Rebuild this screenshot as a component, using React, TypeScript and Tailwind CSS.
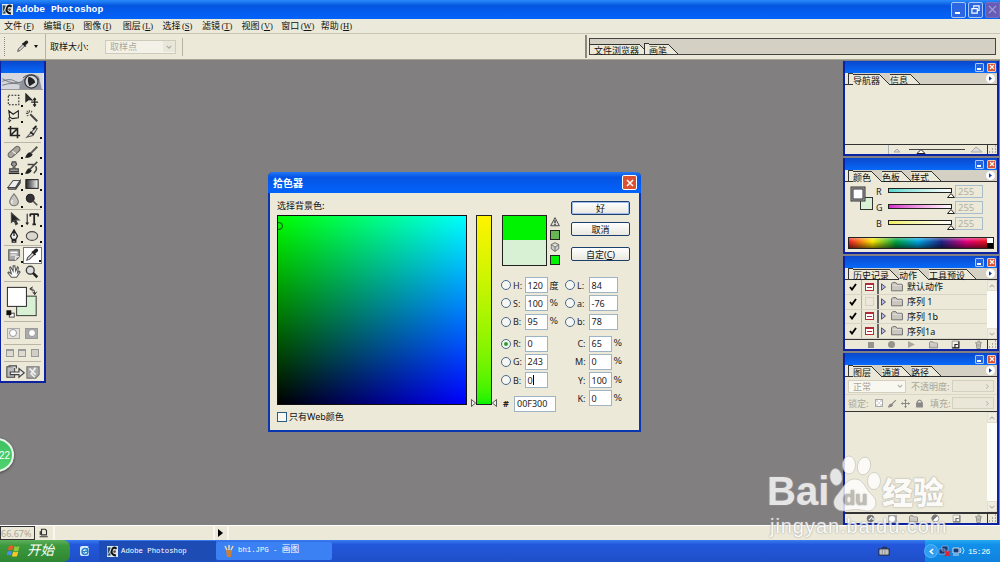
import type { ReactNode } from "react";
import clsx from "clsx";

type TabDef = { label: string; width: string; active?: boolean };

const menus = [
    ["文件", "F"], ["编辑", "E"], ["图像", "I"], ["图层", "L"], ["选择", "S"],
    ["滤镜", "T"], ["视图", "V"], ["窗口", "W"], ["帮助", "H"],
];

const SIMSUN = "font-['Liberation_Mono','Noto_Sans_CJK_SC',monospace]";
const TAHOMA = "font-['Noto_Sans','Noto_Sans_CJK_SC',sans-serif]";

/* ---------- icons ---------- */

function Icon({ children, className = "size-[14px]", box = "0 0 16 16" }: { children: ReactNode; className?: string; box?: string }) {
    return (
        <svg viewBox={box} className={clsx("shrink-0", className)} fill="none" stroke="#222" strokeWidth="1.2">
            {children}
        </svg>
    );
}

const Dropper = ({ className }: { className?: string }) => (
    <Icon className={className}>
        <path d="M2 14l1-3 6-6 2 2-6 6z" fill="#ddd" stroke="#555" />
        <path d="M8 4l4 4M9 5l3-3q2-1 2 1l-3 3z" fill="#222" strokeWidth="2" />
    </Icon>
);

const PsLogo = () => (
    <Icon className="size-[11px]">
        <rect x="0" y="0" width="16" height="16" fill="#dfe9f2" stroke="none" />
        <path d="M1 2h4v12H1z" fill="#2b4a63" stroke="none" />
        <path d="M14 4Q9 0 7 6t6 8" stroke="#111" strokeWidth="3" />
        <path d="M2 12l4-8" stroke="#fff" />
        <circle cx="11" cy="8" r="2" fill="#6b4c3b" stroke="none" />
    </Icon>
);

const Trash = ({ className = "size-[10px]" }: { className?: string }) => (
    <Icon className={className}>
        <path d="M2 5h12M4 5l1 10h6l1-10M6 2l4 0 1 2M7 7v6M9 7v6" stroke="#8a8a85" strokeWidth="1.6" />
    </Icon>
);

const NewPage = ({ dark }: { dark?: boolean }) => (
    <Icon className="size-[9px]">
        <path d="M2 2h12v12H2z" fill="#f4f1e6" stroke={dark ? "#888" : "#aaa"} strokeWidth="1.4" />
        <path d="M2 14h12V2M7 14V8h5" stroke={dark ? "#222" : "#777"} strokeWidth="2" />
    </Icon>
);

const Folder = ({ className = "h-[9px] w-[11px]", tone = "#c9c7bf" }: { className?: string; tone?: string }) => (
    <Icon className={className} box="0 0 22 18">
        <path d="M1 16V3l2-2h6l2 3h9l1 1v11z" fill={tone} stroke="#666" strokeWidth="1.6" />
        <path d="M3 6h16" stroke="#eee" />
    </Icon>
);

const tools: ReactNode[][] = [
    [
        <Icon><rect x="1.5" y="2.5" width="12" height="11" strokeDasharray="2 1.6" /></Icon>,
        <Icon><path d="M1 1v9l3-2.5L8 8z" fill="#333" /><path d="M7 10.500h8M11 6.500v8M9.500 8l1.500-2 1.500 2M9.500 13l1.500 2 1.500-2" strokeWidth="1.5" /></Icon>,
        <Icon><path d="M2 2l5 4 6-4v8l-7 1-3-2zM3 9q-2 3 1 4l-2 2" /></Icon>,
        <Icon><path d="M6 6l8 8" stroke="#444" strokeWidth="2.200" /><path d="M5 1v3M1 5h3M2 2l2 2M8 2L7 4M2 8l2-1" stroke="#555" /></Icon>,
        <Icon><path d="M4 1v11h11M1 4h11v11M4 12l8-8" strokeWidth="1.800" /></Icon>,
        <Icon><path d="M2 14L12 3l2 1-5 8z" fill="#ddd" stroke="#555" /><path d="M9 5l4-4M6 8l4 3" strokeWidth="2" /></Icon>,
    ],
    [
        <Icon><rect x="0" y="5" width="16" height="6" rx="3" transform="rotate(-42 8 8)" fill="#aaa69c" stroke="#666" /><path d="M6 7l4 3" stroke="#eee" /></Icon>,
        <Icon><path d="M1 14q2-5 5-5l2 2q-2 3-7 3z" fill="#222" /><path d="M7 9l7-7" stroke="#555" strokeWidth="2.200" /></Icon>,
        <Icon><path d="M6 1h4l1 3-2 2v3h4v3H3V9h4V6L5 4z" fill="#999" stroke="#444" /><path d="M2 14h12" strokeWidth="1.800" /></Icon>,
        <Icon><path d="M1 14q2-5 4-5l2 2q-2 3-6 3z" fill="#222" /><path d="M6 9l8-8M3 4h7M12 6q3 4-2 8" stroke="#444" strokeWidth="1.700" /></Icon>,
        <Icon><path d="M1 12l6-8h8l-5 8z" fill="#eee" stroke="#555" /><path d="M1 12h9v2H2zM10 12l5-8v3l-5 7" fill="#888" stroke="#444" /></Icon>,
        <Icon><defs><linearGradient id="g"><stop stopColor="#222" /><stop offset="1" stopColor="#fff" /></linearGradient></defs><rect x="1" y="3" width="14" height="10" fill="url(#g)" /></Icon>,
        <Icon><path d="M8 1q5 6 5 9a5 4.500 0 0 1-10 0q0-3 5-9z" fill="#c6c4bd" stroke="#777" /><path d="M6 8q-1 2 0 4" stroke="#fff" /></Icon>,
        <Icon><circle cx="6" cy="6" r="4.500" fill="#333" /><path d="M9 9l5 5" stroke="#555" strokeWidth="2" /></Icon>,
    ],
    [
        <Icon><path d="M5 1v11l3-2.500 2 5 2-1-2-4.500h4z" fill="#222" stroke="#444" /></Icon>,
        <Icon><path d="M6 2.500h9M6 2v3M15 2v3M10.500 3v11M8.500 14h4" strokeWidth="2" /><path d="M2.500 2v12M1 12l1.500 2L4 12" /></Icon>,
        <Icon><path d="M8 1L4 8l2 4h4l2-4zM6 13h4v2H6zM8 2v6" fill="#eee" strokeWidth="1.500" /></Icon>,
        <Icon><ellipse cx="8" cy="8" rx="6.500" ry="5" fill="#d8d6cf" stroke="#444" /></Icon>,
    ],
    [
        <Icon><path d="M2 2h12v8l-4 4H2z" fill="#aaa" stroke="#555" /><path d="M4 5h8M4 8h7M10 14v-4h4" stroke="#fff" /></Icon>,
        <Dropper />,
        <Icon><path d="M5 14L1 9l1-1 3 2-2-7 1-1 3 5V1h2l1 6 2-5 1 1-1 6 2-2 1 1-4 6z" fill="#fafafa" stroke="#555" /></Icon>,
        <Icon><circle cx="6" cy="6" r="4.500" fill="#ddd" stroke="#444" strokeWidth="1.600" /><path d="M9 9l5 5" strokeWidth="3" /></Icon>,
    ],
];

const flyouts = [
    [true, false, true, false, false, true],
    [true, true, true, true, true, true, true, true],
    [true, true, true, true],
    [true, true, false, false],
];

/* ---------- shared pieces ---------- */

function PaletteTab({ tab }: { tab: TabDef }) {
    return (
        <div className="flex h-full items-end">
            <span className={clsx("h-[10px] border-t border-[#333] bg-[#ece9d8] whitespace-nowrap text-[9px] leading-[11px] text-[#111]", tab.width, tab.active && "-mb-px h-[11px]")}>
                {tab.label}
            </span>
            <svg viewBox="0 0 10 11" className={clsx("h-[11px] w-[10px] shrink-0", tab.active && "-mb-px")}>
                <path d="M0 1L10 11H0z" fill="#ece9d8" />
                <path d="M0 1L10 11" stroke="#333" />
            </svg>
        </div>
    );
}

function Palette({ className, tabs, children }: { className: string; tabs: TabDef[]; children: ReactNode }) {
    return (
        <section className={clsx("absolute left-[843px] flex w-[156px] flex-col border-2 border-t-0 border-[#0c22a0] bg-[#ece9d8]", className)}>
            <header className="flex h-[12px] shrink-0 items-center justify-end gap-[3px] bg-linear-to-b from-[#0a48cc] to-[#0769fa] pr-px">
                <span className="flex h-[9px] w-[9px] items-end rounded-[1px] border border-[#a9c8f5] bg-[#2563dc] p-px">
                    <i className="h-[2px] w-[4px] bg-white" />
                </span>
                <span className="flex size-[9px] items-center justify-center rounded-[1px] border border-[#f0c8bd] bg-[#d75332]">
                    <svg viewBox="0 0 6 6" className="size-[6px]"><path d="M1 1l4 4M5 1L1 5" stroke="#fff" strokeWidth="1.200" /></svg>
                </span>
            </header>
            <div className="flex h-[12px] shrink-0 items-end border-b border-[#333] bg-[#d4d0c3] pr-[2px]">
                <span className="h-full w-[3px] bg-[#ece9d8]" />
                <span className="h-full w-[5px] border-t border-l border-[#333] bg-[#ece9d8]" />
                {tabs.map((t) => <PaletteTab key={t.label} tab={t} />)}
                <span className="mb-px ml-auto flex size-[9px] items-center justify-center rounded-full bg-white">
                    <svg viewBox="0 0 4 6" className="h-[5px] w-[3px]"><path d="M0 0l4 3-4 3z" fill="#1b3c9c" /></svg>
                </span>
            </div>
            {children}
        </section>
    );
}

const Grip = () => (
    <span className="flex h-full w-[10px] shrink-0 items-end justify-end border-l border-[#333]">
        <svg viewBox="0 0 9 9" className="size-[9px]">
            <path d="M7 1h1M7 4h1M4 4h1M7 7h1M4 7h1M1 7h1" stroke="#999" strokeWidth="1.500" />
        </svg>
    </span>
);

function ScrollBar() {
    return (
        <div className="flex w-[10px] shrink-0 flex-col justify-between bg-[#fcfcf8]">
            {["M1 4l3-3 3 3", "M1 1l3 3 3-3"].map((d) => (
                <span key={d} className="flex h-[11px] items-center justify-center border border-[#e2dfd0] bg-[#efece0]">
                    <svg viewBox="0 0 8 5" className="h-[4px] w-[6px]"><path d={d} fill="none" stroke="#b5b2a5" strokeWidth="1.400" /></svg>
                </span>
            ))}
        </div>
    );
}

/* ---------- application chrome ---------- */

function TitleBar() {
    return (
        <div className="flex h-[19px] items-center bg-linear-to-b from-[#2b8bfa] via-[#0556e0] via-30% to-[#0263fb] pl-[2px]">
            <PsLogo />
            <span className={clsx("ml-[3px] text-[9.700px] leading-none font-bold text-white", SIMSUN)}>Adobe Photoshop</span>
            <div className="ml-auto flex gap-[2px]">
                <span className="flex h-[16px] w-[15px] items-end rounded-[2px] border border-[#a6c5f7] bg-[#2c66e0] p-[3px]"><i className="h-[2px] w-[5px] bg-white" /></span>
                <span className="flex h-[16px] w-[15px] items-center justify-center rounded-[2px] border border-[#a6c5f7] bg-[#2c66e0]">
                    <svg viewBox="0 0 10 10" className="size-[9px]"><path d="M3 3V1h6v5H7M1 4h6v5H1z" fill="none" stroke="#fff" strokeWidth="1.300" /></svg>
                </span>
                <span className="flex h-[16px] w-[15px] items-center justify-center rounded-[2px] border border-[#776fc5] bg-[#675cb5]">
                    <svg viewBox="0 0 10 10" className="size-[9px]"><path d="M1 1l8 8M9 1L1 9" stroke="#a9a0d4" strokeWidth="1.400" /></svg>
                </span>
            </div>
        </div>
    );
}

function MenuBar() {
    return (
        <div className="flex h-[14px] items-center bg-[#ebe9d9] pl-[4px] text-[#111]">
            {menus.map(([name, key]) => (
                <span key={key} className="flex w-[39.600px] shrink-0 items-baseline text-[9px] leading-[15px] whitespace-nowrap">
                    {name}
                    <span className="pl-[1.500px] text-[8.500px] font-['Liberation_Serif',serif]">(<u>{key}</u>)</span>
                </span>
            ))}
        </div>
    );
}

function OptionsBar() {
    return (
        <div className="flex h-[27px] items-center border-t border-b border-t-[#c9c6b7] border-b-[#a7a492] bg-[#ece9d8]">
            <span className="ml-[4px] h-[19px] border-l border-dotted border-[#888]" />
            <Dropper className="ml-[11px] size-[13px]" />
            <svg viewBox="0 0 4 3" className="ml-[5px] h-[3px] w-[4px]"><path d="M0 0h4L2 3z" fill="#111" /></svg>
            <span className="ml-[7px] h-full border-l border-[#b5b2a3]" />
            <span className="ml-[4px] w-[55px] text-[9px] leading-none text-[#111]">取样大小:</span>
            <span className="flex h-[14px] w-[71px] items-center justify-between border border-[#cfcbbb] bg-[#f4f2e8] pl-[4px] text-[9px] leading-none text-[#aaa79a]">
                取样点
                <span className="flex h-[11px] w-[12px] items-center justify-center bg-[#e9e6da]">
                    <svg viewBox="0 0 8 5" className="h-[4px] w-[6px]"><path d="M1 1l3 3 3-3" fill="none" stroke="#aaa" strokeWidth="1.500" /></svg>
                </span>
            </span>
            <span className="ml-[6px] h-[18px] border-l border-[#b5b2a3]" />
            <span className="ml-auto h-[23px] w-[2px] bg-[#8a887f]" />
            <div className="mr-[4px] ml-[2px] flex h-[17px] w-[407px] items-end border border-[#444] bg-[#d4d0c3] text-[#111]">
                <PaletteTab tab={{ label: "文件浏览器", width: "w-[49px] pl-[4px]" }} />
                <span className="-ml-[5px] h-[11px] w-[5px] border-t border-l border-[#333] bg-[#ece9d8]" />
                <PaletteTab tab={{ label: "画笔", width: "w-[19px]" }} />
            </div>
        </div>
    );
}

function ToolBox() {
    const heights = ["h-[53px]", "h-[67px]", "h-[36px]", "h-[36px]"];
    return (
        <aside className="absolute top-[61px] left-0 flex h-[322px] w-[46px] flex-col border-r-2 border-b-2 border-l border-[#0c22a0] bg-[#ece9d8]">
            <div className="h-[12px] shrink-0 bg-linear-to-b from-[#0a48cc] to-[#0769fa]" />
            <svg viewBox="0 0 42 17" className="h-[17px] w-[42px] shrink-0 border-b border-[#999] bg-[#d8dade]">
                <rect width="42" height="17" fill="#d5d7dc" />
                <path d="M0 9q8-4 14 0t13-4M0 6q12 8 24 2M0 13q12-4 22 0" stroke="#70757d" fill="none" />
                <path d="M18 17q0-8 7-13t14 0l3 13z" fill="#8f929a" />
                <circle cx="31" cy="9" r="7" fill="#d5d8dc" stroke="#333" strokeWidth="1.300" />
                <path d="M28 4q6 1 7 6l-6 4q-3-5-1-10z" fill="#222" />
                <path d="M22 5q8-7 17 2" stroke="#444" fill="none" />
            </svg>
            {tools.map((group, g) => (
                <div key={g} className={clsx("mx-[3px] grid shrink-0 grid-cols-2 content-center border-b border-[#b9b6a8]", heights[g])}>
                    {group.map((icon, i) => (
                        <span key={i} className={clsx("relative flex h-[16.300px] w-[19px] items-center justify-center", g === 3 && i === 1 && "border border-[#777] bg-white")}>
                            {icon}
                            {flyouts[g][i] && <i className="absolute right-0 bottom-[1px] size-[2px] bg-[#111]" />}
                        </span>
                    ))}
                </div>
            ))}
            <div className="mx-[3px] h-[40px] shrink-0 border-b border-[#b9b6a8]">
                <svg viewBox="0 0 38 40" className="h-[39px] w-[38px]">
                    <rect x="12.500" y="14.500" width="20" height="20" fill="#d8f0d4" stroke="#333" />
                    <rect x="3" y="5.500" width="19.500" height="19.500" fill="#fff" stroke="#222" />
                    <rect x="5" y="32" width="5" height="4" fill="#fff" stroke="#444" />
                    <rect x="2" y="29" width="5" height="5" fill="#111" />
                    <path d="M27 7q4 0 4 5M29 5l-3 2 3 2M29 10l2 3 2-3" fill="none" stroke="#222" />
                </svg>
            </div>
            <div className="mx-[3px] flex h-[23px] shrink-0 items-center justify-around border-b border-[#b9b6a8]">
                <span className="flex h-[11px] w-[13px] items-center justify-center border border-[#aaa] bg-[#e4e2da]"><i className="size-[8px] rounded-full border border-[#999] bg-white" /></span>
                <span className="flex h-[11px] w-[13px] items-center justify-center border border-[#999] bg-[#aaa]"><i className="size-[8px] rounded-full border border-[#999] bg-white" /></span>
            </div>
            <div className="mx-[3px] flex h-[17px] shrink-0 items-center justify-around border-b border-[#b9b6a8]">
                <i className="size-[8px] border border-t-2 border-[#999] bg-[#dddbd0]" />
                <i className="size-[8px] border border-t-2 border-[#999] bg-[#dddbd0]" />
                <i className="size-[8px] border border-[#999] bg-[#d0cec5]" />
            </div>
            <div className="flex grow items-center justify-center gap-[1px]">
                <Icon className="h-[14px] w-[19px]" box="0 0 22 16">
                    <path d="M1 2h9v12H1z" fill="#bbb" stroke="#444" />
                    <path d="M3 1h9v3M5 8h10V4l6 5-6 5v-3H5z" fill="#eee" stroke="#444" strokeWidth="1.400" />
                </Icon>
                <Icon className="size-[14px]">
                    <path d="M1 2h14v9l-4 4H1z" fill="#aaa" stroke="#777" />
                    <path d="M4 4l7 7M11 3l-5 7 4 4" stroke="#eee" strokeWidth="2" />
                </Icon>
            </div>
        </aside>
    );
}

/* ---------- palettes ---------- */

function Navigator() {
    return (
        <Palette className="top-[61px] h-[95px]" tabs={[{ label: "导航器", width: "w-[27px]", active: true }, { label: "信息", width: "w-[20px]" }]}>
            <div className="grow" />
            <div className="flex h-[10px] shrink-0 items-center border-t border-[#333]">
                <span className="h-full w-[44px] border-r border-[#aab4b8]" />
                <svg viewBox="0 0 98 9" className="h-[9px] w-[98px]">
                    <path d="M5 7l3-3 3 3zM82 7l5-5 6 5z" fill="#ddd" stroke="#aaa" />
                    <path d="M20 4.500h56" stroke="#444" />
                    <path d="M28 8.500l4-4 4 4z" fill="#fff" stroke="#222" />
                </svg>
                <Grip />
            </div>
        </Palette>
    );
}

const channels = [
    { name: "R", bar: "from-[#54d8d0]" },
    { name: "G", bar: "from-[#d32cc8]" },
    { name: "B", bar: "from-[#f3ef62]" },
];

function ColorPalette() {
    return (
        <Palette className="top-[158px] h-[96px]" tabs={[{ label: "颜色", width: "w-[19px]", active: true }, { label: "色板", width: "w-[19px]" }, { label: "样式", width: "w-[20px]" }]}>
            <div className="flex grow pt-px">
                <svg viewBox="0 0 30 30" className="h-[30px] w-[30px]">
                    <rect x="15.500" y="14.500" width="12" height="12" fill="#d8f0d4" stroke="#333" />
                    <rect x="7" y="5" width="12" height="12" fill="#fff" stroke="#333" strokeWidth="3" />
                    <rect x="7" y="5" width="12" height="12" fill="none" stroke="#aaa" />
                </svg>
                <div className="flex grow flex-col">
                    {channels.map((c) => (
                        <div key={c.name} className="flex h-[16px] items-center">
                            <span className={clsx("w-[13px] pl-px text-[9px] leading-none text-[#222]", TAHOMA)}>{c.name}</span>
                            <span className="flex h-[11px] w-[67px] flex-col items-start pt-[2px]">
                                <i className={clsx("h-[5px] w-[64px] shrink-0 border border-[#222] bg-linear-to-r to-white", c.bar)} />
                                <svg viewBox="0 0 8 5" className="ml-[59px] h-[5px] w-[8px] shrink-0"><path d="M.5 4.500L4 .5l3.500 4z" fill="#fff" stroke="#222" /></svg>
                            </span>
                            <span className={clsx("h-[13px] w-[28px] border border-[#a9bccb] pl-[2px] text-[9.500px] leading-[12px] text-[#b3b0a3]", TAHOMA)}>255</span>
                        </div>
                    ))}
                </div>
            </div>
            <div className="mx-[3px] mb-[3px] flex h-[12px] shrink-0 border border-[#222]">
                <div className="grow bg-[linear-gradient(to_bottom,rgba(255,255,255,.35),transparent_35%,rgba(0,0,0,.55)),linear-gradient(to_right,#f11c24,#fbe800_17%,#00a23f_34%,#00a5e4_50%,#1f2585_67%,#e4007f_85%,#e8131c)]" />
                <div className="flex w-[6px] flex-col"><i className="h-1/2 bg-white" /><i className="h-1/2 bg-black" /></div>
            </div>
        </Palette>
    );
}

const actions = [
    { name: "默认动作", modal: true },
    { name: "序列 1", modal: false },
    { name: "序列 1b", modal: true },
    { name: "序列1a", modal: true },
];

function ActionsPalette() {
    return (
        <Palette className="top-[256px] h-[95px]" tabs={[{ label: "历史记录", width: "w-[36px]" }, { label: "动作", width: "w-[20px]", active: true }, { label: "工具预设", width: "w-[37px]" }]}>
            <div className="flex h-[59px] shrink-0">
                <div className="flex grow flex-col">
                    {actions.map((a) => (
                        <div key={a.name} className="flex h-[14.750px] items-center border-b border-[#d8d5c6]">
                            <span className="flex h-full w-[17px] items-center justify-center border-r border-[#aaa]">
                                <svg viewBox="0 0 8 8" className="size-[8px]"><path d="M1 4l2 2.500L7 1" fill="none" stroke="#000" strokeWidth="1.900" /></svg>
                            </span>
                            <span className="flex h-full w-[17px] items-center justify-center border-r-2 border-[#666]">
                                {a.modal
                                    ? <i className="flex h-[8px] w-[9px] items-center justify-center border border-t-2 border-[#b22a35] bg-white"><i className="h-px w-[5px] bg-[#b22a35]" /></i>
                                    : <i className="size-[9px] border border-[#d5d2c3]" />}
                            </span>
                            <svg viewBox="0 0 5 8" className="ml-[2px] h-[8px] w-[5px]"><path d="M.5 .8l4 3.200-4 3.200z" fill="#b7b7ea" stroke="#334" strokeWidth=".8" /></svg>
                            <Folder className="ml-[5px] h-[10px] w-[12px]" />
                            <span className={clsx("ml-[4px] text-[9px] leading-none whitespace-nowrap text-[#111]", TAHOMA)}>{a.name}</span>
                        </div>
                    ))}
                </div>
                <ScrollBar />
            </div>
            <div className="flex grow items-center border-t border-[#333]">
                <div className="flex grow items-center justify-between pr-[4px] pl-[23px]">
                    <i className="size-[6px] bg-[#96948c]" />
                    <i className="size-[7px] rounded-full bg-[#96948c]" />
                    <svg viewBox="0 0 7 7" className="size-[7px]"><path d="M0 0l7 3.500L0 7z" fill="#aaa89f" /></svg>
                    <Folder className="h-[8px] w-[9px]" />
                    <NewPage dark />
                    <Trash className="size-[9px]" />
                </div>
                <Grip />
            </div>
        </Palette>
    );
}

const ValueBox = () => (
    <span className="flex h-[12px] w-[42px] items-center justify-end border border-[#d3d0c0] bg-[#eae7d8] pr-[4px]">
        <svg viewBox="0 0 4 6" className="h-[5px] w-[3px]"><path d="M0 0l3 3-3 3" fill="none" stroke="#aaa" strokeWidth="1.300" /></svg>
    </span>
);

function LayersPalette() {
    return (
        <Palette className="top-[353px] h-[172px]" tabs={[{ label: "图层", width: "w-[19px]", active: true }, { label: "通道", width: "w-[19px]" }, { label: "路径", width: "w-[20px]" }]}>
            <div className="flex h-[18px] shrink-0 items-center border-b border-[#dad7c8] px-[3px] pt-px text-[9px] leading-none whitespace-nowrap text-[#aaa79a]">
                <span className="flex h-[13px] w-[58px] items-center justify-between border border-[#d3d0c0] bg-[#f8f7f0] pr-[2px] pl-[4px]">
                    正常
                    <svg viewBox="0 0 8 5" className="h-[4px] w-[6px]"><path d="M1 1l3 3 3-3" fill="none" stroke="#b5b2a5" strokeWidth="1.500" /></svg>
                </span>
                <span className="ml-[5px] w-[41px]">不透明度:</span>
                <ValueBox />
            </div>
            <div className="flex h-[17px] shrink-0 items-center border-b border-[#333] px-[3px] text-[9px] leading-none whitespace-nowrap text-[#aaa79a]">
                <span className="w-[27px]">锁定:</span>
                <i className="size-[8px] border border-[#aaa] bg-[repeating-conic-gradient(#fff_0_25%,#ddd_0_50%)] bg-size-[4px_4px]" />
                <Icon className="ml-[5px] size-[9px]"><path d="M1 14q2-5 5-5l2 2q-2 3-7 3zM7 9l7-7" fill="#888" stroke="#888" strokeWidth="2" /></Icon>
                <Icon className="ml-[4px] size-[9px]"><path d="M8 1v14M1 8h14M6 3l2-2 2 2M6 13l2 2 2-2M3 6L1 8l2 2M13 6l2 2-2 2" stroke="#777" strokeWidth="1.500" /></Icon>
                <Icon className="ml-[5px] size-[9px]"><path d="M3 7h10v7H3z" fill="#888" stroke="#888" strokeWidth="2" /><path d="M4 7V5q4-6 8 0v2" stroke="#888" strokeWidth="2" /></Icon>
                <span className="ml-[6px] w-[22px]">填充:</span>
                <ValueBox />
            </div>
            <div className="flex grow">
                <div className="grow" />
                <ScrollBar />
            </div>
            <div className="flex h-[11px] shrink-0 items-center border-t-2 border-[#333]">
                <div className="flex grow items-center justify-between pr-[4px] pl-[21px]">
                    <Icon className="size-[9px]"><circle cx="8" cy="8" r="6" fill="#777" stroke="#666" /><path d="M5 11l6-6" stroke="#fff" strokeWidth="2" /></Icon>
                    <i className="flex h-[8px] w-[9px] items-center justify-center bg-[#aaa]"><i className="size-[6px] rounded-full bg-white" /></i>
                    <Folder className="h-[8px] w-[9px]" />
                    <Icon className="size-[9px]"><circle cx="8" cy="8" r="6" fill="#fff" stroke="#777" /><path d="M3 12A6 6 0 0 1 12 3z" fill="#777" stroke="none" /></Icon>
                    <NewPage />
                    <Trash className="size-[9px]" />
                </div>
                <Grip />
            </div>
        </Palette>
    );
}

/* ---------- colour picker dialog ---------- */

const Radio = ({ on }: { on?: boolean }) => (
    <span className="flex size-[10px] shrink-0 items-center justify-center rounded-full border border-[#49688a] bg-[#f7f7f2]">
        {on && <i className="size-[4px] rounded-full bg-[#2aa52a]" />}
    </span>
);

function Field({ label, value, unit, width = "w-[23px]", radio, on, caret }: { label: string; value: string; unit?: string; width?: string; radio?: boolean; on?: boolean; caret?: boolean }) {
    return (
        <div className={clsx("flex h-[18.300px] items-center text-[9px] leading-none text-[#222]", TAHOMA)}>
            {radio ? <Radio on={on} /> : <span className="w-[10px]" />}
            <span className={clsx("shrink-0", radio ? "w-[13.500px] pl-[2px]" : "w-[10.500px] text-right")}>{label}:</span>
            {!radio && <span className="w-[3px]" />}
            <span className={clsx("flex h-[16px] shrink-0 items-center border border-[#9db4c4] bg-white pl-[2px]", width)}>
                {value}
                {caret && <i className="h-[10px] border-l border-black" />}
            </span>
            <span className={clsx("pl-[2px]", unit === "%" && "font-['DejaVu_Sans',sans-serif]")}>{unit}</span>
        </div>
    );
}

function XpButton({ children, focus }: { children: ReactNode; focus?: boolean }) {
    return (
        <button className={clsx("flex h-[14px] w-[59px] items-center justify-center rounded-[2px] border border-[#1d3f70] bg-linear-to-b from-white to-[#e9e7de] text-[9px] leading-none text-[#111]", focus && "shadow-[inset_0_0_0_1px_#9dbcf0]", TAHOMA)}>
            <span>{children}</span>
        </button>
    );
}

function ColorPicker() {
    return (
        <div className="absolute top-[172px] left-[268px] flex h-[260px] w-[373px] flex-col rounded-t-[5px] border-[2px] border-t-0 border-[#0a35b0] bg-[#ece9d8]">
            <header className="-mx-[2px] flex h-[21px] shrink-0 items-center justify-between rounded-t-[5px] bg-linear-to-b from-[#2377f4] via-[#0554e4] via-25% to-[#0363fb] pr-[4px] pl-[5px]">
                <span className="text-[10px] leading-none font-bold text-white">拾色器</span>
                <span className="flex size-[15px] items-center justify-center rounded-[2px] border border-white bg-[#dc5130]">
                    <svg viewBox="0 0 8 8" className="size-[8px]"><path d="M1 1l6 6M7 1L1 7" stroke="#fff" strokeWidth="1.500" /></svg>
                </span>
            </header>
            <div className="flex grow pl-[7px]">
                <div className="flex w-[193px] flex-col">
                    <span className="h-[22px] pt-[8px] text-[9px] leading-[10px] whitespace-nowrap text-[#111]">选择背景色:</span>
                    <div className="relative h-[190px] w-[190px] shrink-0 overflow-hidden border border-[#111] bg-[linear-gradient(to_bottom,#00ff00,#000),linear-gradient(to_right,#000,#0000ff)] bg-blend-screen">
                        <i className="absolute top-[6px] left-[-3px] size-[8px] rounded-full border border-[#0b4d0b]" />
                    </div>
                    <div className="mt-[6px] flex items-center gap-[2px]">
                        <i className="size-[10px] border border-[#2d5a80] bg-[#f7f7f4]" />
                        <span className={clsx("text-[9px] leading-[12px] text-[#111]", TAHOMA)}>只有Web颜色</span>
                    </div>
                </div>
                <div className="flex w-[28px] pt-[22px] pl-px">
                    <svg viewBox="0 0 5 8" className="mt-[184px] h-[8px] w-[5px] shrink-0"><path d="M.5 .5L4.500 4l-4 3.500z" fill="#eee" stroke="#333" strokeWidth=".8" /></svg>
                    <i className="h-[190px] w-[16px] shrink-0 border border-[#222] bg-linear-to-b from-[#fff300] to-[#00f300]" />
                    <svg viewBox="0 0 5 8" className="mt-[184px] h-[8px] w-[5px] shrink-0"><path d="M4.500 .5L.5 4l4 3.500z" fill="#eee" stroke="#333" strokeWidth=".8" /></svg>
                </div>
                <div className="flex flex-col pl-[3px]">
                    <div className="flex h-[83px]">
                        <div className="mt-[22px] ml-px flex h-[51px] w-[45px] flex-col border border-[#222]">
                            <i className="grow bg-[#00f300]" />
                            <i className="h-[25px] bg-[#d8f0d4]" />
                        </div>
                        <div className="ml-[3px] flex w-[10px] flex-col items-center gap-[2.500px] pt-[24px]">
                            <Icon className="size-[10px]"><path d="M8 1L1 14h14z" fill="#ddd" stroke="#444" strokeWidth="1.500" /><path d="M8 5v5M8 11v2" strokeWidth="2" /></Icon>
                            <i className="size-[10px] border border-[#222] bg-[#68b653]" />
                            <Icon className="size-[10px]"><path d="M8 1l6 3v7l-6 4-6-4V4zM2 4l6 4 6-4M8 8v7" fill="#ccc" stroke="#555" /></Icon>
                            <i className="size-[10px] border border-[#222] bg-[#00f300]" />
                        </div>
                        <div className="ml-[11px] flex flex-col pt-[8px]">
                            <XpButton focus>好</XpButton>
                            <div className="pt-[7px]"><XpButton>取消</XpButton></div>
                            <div className="pt-[11px]"><XpButton>自定(<u>C</u>)</XpButton></div>
                        </div>
                    </div>
                    <div className="flex">
                        <div className="w-[64px]">
                            <Field radio label="H" value="120" unit="度" />
                            <Field radio label="S" value="100" unit="%" />
                            <Field radio label="B" value="95" unit="%" />
                            <div className="h-[3.500px]" />
                            <Field radio on label="R" value="0" />
                            <Field radio label="G" value="243" />
                            <Field radio label="B" value="0" caret />
                        </div>
                        <div>
                            <Field radio label="L" value="84" width="w-[29px]" />
                            <Field radio label="a" value="-76" width="w-[29px]" />
                            <Field radio label="b" value="78" width="w-[29px]" />
                            <div className="h-[3.500px]" />
                            <Field label="C" value="65" unit="%" />
                            <Field label="M" value="0" unit="%" />
                            <Field label="Y" value="100" unit="%" />
                            <Field label="K" value="0" unit="%" />
                        </div>
                    </div>
                    <div className={clsx("-mt-[12px] flex h-[16px] w-[56px] items-center text-[9px] leading-none text-[#222]", TAHOMA)}>
                        <span className="w-[13px] pl-[2px] font-bold">#</span>
                        <span className="flex h-[16px] w-[42px] items-center border border-[#9db4c4] bg-white pl-[2px]">00F300</span>
                    </div>
                </div>
            </div>
        </div>
    );
}

/* ---------- bottom bars ---------- */

function StatusBar() {
    return (
        <div className="flex h-[15px] items-center border-t border-white bg-[#ece9d8]">
            <span className={clsx("flex h-[14px] w-[35px] items-center border border-[#333] text-[9px] leading-none text-[#a9a69a]", TAHOMA)}>66.67%</span>
            <Icon className="ml-[4px] size-[10px]"><path d="M4 2h6l2 2v7H4zM1 14h13M4 6H2v5" stroke="#333" strokeWidth="1.800" /></Icon>
            <span className="ml-[4px] h-full w-[2px] bg-[#f8f6ee]" />
            <span className="ml-[158px] h-full w-[2px] bg-[#f8f6ee]" />
            <svg viewBox="0 0 5 8" className="ml-[3px] h-[8px] w-[5px]"><path d="M0 0l5 4-5 4z" fill="#000" /></svg>
            <span className="ml-[4px] h-full w-[2px] bg-[#f8f6ee]" />
        </div>
    );
}

function Taskbar() {
    return (
        <div className="flex h-[22px] items-center bg-linear-to-b from-[#3a7df0] via-[#2358dc] via-20% to-[#1f4fc8] text-white">
            <div className="flex h-full w-[70px] items-center rounded-r-[7px] bg-linear-to-b from-[#5fb05c] via-[#3c9a3d] via-25% to-[#2f8632] pl-[7px]">
                <svg viewBox="0 0 16 14" className="h-[12px] w-[14px]">
                    <path d="M2 1q3-1 5 0L6 6Q4 5 1 6z" fill="#f0582c" />
                    <path d="M8.500 1.500q3 1 6 0L13 7q-3 1-5.500 0z" fill="#8ecb3b" />
                    <path d="M.5 7.500q3-1 5 0L4.500 12q-2-1-5 0z" fill="#4b8ef0" />
                    <path d="M7 8q3 1 6 0l-1.500 5q-3 1-6 0z" fill="#fbc72f" />
                </svg>
                <span className="-mt-[3px] ml-[6px] text-[13.500px] leading-none italic">开始</span>
            </div>
            <svg viewBox="0 0 12 12" className="ml-[9px] size-[12px]">
                <rect x="1" y="1" width="9" height="10" rx="2" fill="#d8ecfa" />
                <circle cx="6" cy="6.500" r="3" fill="none" stroke="#2b7fc9" strokeWidth="1.500" />
                <path d="M3 6.500h6M4 9l6-7" stroke="#2b7fc9" />
            </svg>
            <div className={clsx("ml-[8px] flex h-[20px] w-[117px] items-center bg-[#1c4cb4] pl-[8px] text-[7.300px]", SIMSUN)}>
                <PsLogo />
                <span className="ml-[3px] pt-px whitespace-nowrap">Adobe Photoshop</span>
            </div>
            <div className={clsx("flex h-[18px] w-[116px] items-center rounded-[2px] bg-[#3c81f3] pl-[8px] text-[7.300px]", SIMSUN)}>
                <svg viewBox="0 0 10 12" className="h-[12px] w-[10px]">
                    <path d="M2 5h6l-1 7H3z" fill="#c8813b" />
                    <path d="M1 1l2 4M5 0v5M9 1L7 5" stroke="#e9d9b8" strokeWidth="1.500" />
                </svg>
                <span className="ml-[4px] whitespace-nowrap">bh1.JPG - <span className="text-[8.700px]">画图</span></span>
            </div>
            <svg viewBox="0 0 12 10" className="mr-[35px] ml-auto h-[10px] w-[12px]">
                <rect x="1" y="3" width="10" height="6" fill="#eee" stroke="#222" />
                <path d="M2.500 5h7M2.500 7h7" stroke="#333" strokeDasharray="1 .6" />
                <path d="M4 2q2-2 5 0" stroke="#222" fill="none" />
            </svg>
            <div className="flex h-full w-[75px] items-center bg-linear-to-b from-[#27aaf3] via-[#1291ea] via-20% to-[#0f82de]">
                <span className="flex size-[12px] shrink-0 items-center justify-center rounded-full bg-[#2f9df2] shadow-[0_0_0_1px_#4fb4f8]">
                    <svg viewBox="0 0 6 8" className="h-[7px] w-[5px]"><path d="M5 1L1.500 4 5 7" stroke="#fff" strokeWidth="1.800" fill="none" /></svg>
                </span>
                <svg viewBox="0 0 28 12" className="ml-px h-[12px] w-[28px] shrink-0">
                    <path d="M4 1h6v5H4zM1 4h6v5H1z" fill="#163a78" stroke="#9bb7dd" strokeWidth=".7" />
                    <path d="M7 6l5 5M12 6l-5 5" stroke="#e3202c" strokeWidth="1.800" />
                    <path d="M15 3h6v5h-6zM15 10h6" fill="#163a78" stroke="#c7dcf2" />
                    <path d="M22 3q2 2 0 5M24.500 2q3 3.500 0 7" stroke="#c7e3fa" fill="none" />
                </svg>
                <span className={clsx("ml-[2px] pt-[2px] text-[8px] leading-none tracking-[-.400px]", SIMSUN)}>15:26</span>
            </div>
        </div>
    );
}

function Watermark() {
    return (
        <div className="absolute top-[454px] left-[766px] h-[88px] w-[184px] opacity-80 [text-shadow:0_0_2px_#999,0_0_1px_#aaa]">
            <div className="flex h-[60px] items-end">
                <span className="w-[62px] pl-px text-[40px] leading-[45px] font-bold text-white font-['Liberation_Sans',sans-serif]">Bai</span>
                <svg viewBox="0 0 54 58" className="mb-px h-[58px] w-[54px] shrink-0" fill="#fff" stroke="#bbb" strokeWidth=".7">
                    <ellipse cx="8" cy="22" rx="6" ry="8.500" transform="rotate(-8 8 22)" />
                    <ellipse cx="21" cy="10" rx="6.500" ry="9" />
                    <ellipse cx="36" cy="11" rx="6.500" ry="9" transform="rotate(15 36 11)" />
                    <ellipse cx="46" cy="26" rx="6.500" ry="8.500" />
                    <path d="M27 24c9 0 10 10 17 16s4 17-6 16c-6-2-14-2-21 0-10 1-15-8-8-16s9-16 18-16z" />
                    <text x="15" y="50" fontSize="20" fontWeight="bold" fill="#b5b2aa" stroke="none" fontFamily="Liberation Sans">du</text>
                </svg>
                <span className="text-[31px] leading-[46px] font-black whitespace-nowrap text-white">经验</span>
            </div>
            <span className="ml-[4px] block text-[20px] leading-[24px] tracking-[.950px] text-white font-['Liberation_Sans',sans-serif]">jingyan.baidu.com</span>
        </div>
    );
}

export default function App() {
    return (
        <div className="relative flex h-[562px] w-[1000px] flex-col overflow-hidden bg-[#827f81] font-['Noto_Sans_CJK_SC',sans-serif]">
            <TitleBar />
            <MenuBar />
            <OptionsBar />
            <main className="grow" />
            <StatusBar />
            <Taskbar />

            <ToolBox />
            <Navigator />
            <ColorPalette />
            <ActionsPalette />
            <LayersPalette />
            <ColorPicker />

            {/* floating score ball, half off the left edge */}
            <div className="absolute top-[438px] left-[-20px] flex size-[34px] items-center justify-end rounded-full border-2 border-[#e8f7ea] bg-linear-to-b from-[#3fc163] to-[#4fd36f] pr-[2px] text-[10px] text-white shadow-[0_1px_3px_#444] font-['Liberation_Sans',sans-serif]">22</div>
            <Watermark />
        </div>
    );
}
